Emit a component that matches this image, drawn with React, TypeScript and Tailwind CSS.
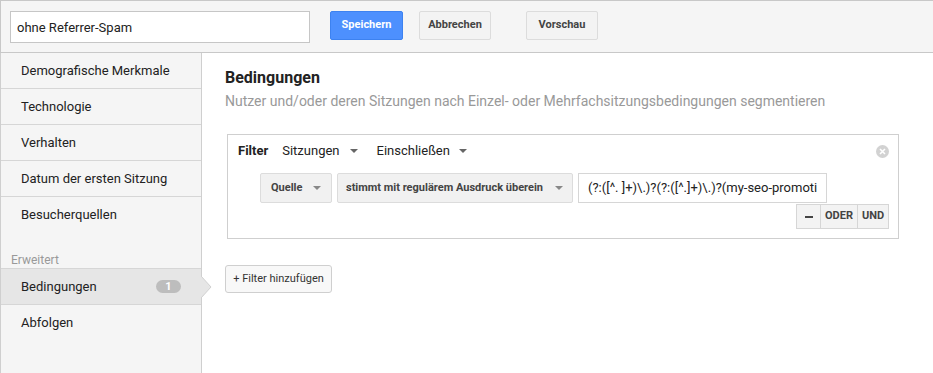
import React from "react";

const sections = [
  "Demografische Merkmale",
  "Technologie",
  "Verhalten",
  "Datum der ersten Sitzung",
  "Besucherquellen",
];

const Caret = ({ className = "" }: { className?: string }) => (
  <svg width="8" height="4" viewBox="0 0 8 4" className={className}>
    <path d="M0 0 L8 0 L4 4 Z" fill="currentColor" />
  </svg>
);

const App = () => {
  return (
    <div className="w-[933px] h-[373px] overflow-hidden bg-white flex flex-col font-['Roboto',sans-serif] text-[#222]">
      {/* top bar */}
      <div className="h-[53px] shrink-0 flex items-start bg-[#f5f5f5] border-t border-b border-l border-[#c8c8c8]">
        <input
          readOnly
          value="ohne Referrer-Spam"
          className="mt-[10px] ml-[9px] w-[300px] h-[32px] px-[6px] bg-white border border-[#c6c6c6] text-[13px] text-[#222] outline-none"
        />
        <button className="mt-[10px] ml-[20px] w-[73px] h-[29px] rounded-[2px] bg-[#4d90fe] border border-[#3d82f0] text-white text-[11px] font-bold">
          Speichern
        </button>
        <button className="mt-[10px] ml-[16px] w-[72px] h-[29px] rounded-[2px] bg-[#f3f3f3] border border-[#dcdcdc] text-[#444] text-[11px] font-bold">
          Abbrechen
        </button>
        <button className="mt-[10px] ml-[35px] w-[72px] h-[29px] rounded-[2px] bg-[#f3f3f3] border border-[#dcdcdc] text-[#444] text-[11px] font-bold">
          Vorschau
        </button>
      </div>

      <div className="flex flex-1 min-h-0">
        {/* sidebar */}
        <div className="relative w-[202px] shrink-0 bg-[#f5f5f5] border-l border-r border-[#cfcfcf] text-[13px]">
          {sections.map((s, i) => (
            <div
              key={s}
              className={`h-[36px] flex items-center pl-[20px] ${i < sections.length - 1 ? "border-b border-[#d6d6d6]" : ""}`}
            >
              {s}
            </div>
          ))}
          <div className="h-[36px] pt-[19px] pl-[10px] border-b border-[#d6d6d6] text-[12px] leading-[16px] text-[#999]">
            Erweitert
          </div>
          <div className="relative h-[36px] flex items-center justify-between pl-[20px] pr-[20px] bg-[#e6e6e6] border-b border-[#d6d6d6]">
            <span>Bedingungen</span>
            <span className="w-[25px] h-[13px] rounded-full bg-[#bdbdbd] text-white text-[11px] font-bold leading-[13px] text-center">
              1
            </span>
            <svg
              width="11"
              height="22"
              viewBox="0 0 11 22"
              className="absolute right-[-11px] top-[7px]"
            >
              <path d="M0 0 L10 11 L0 22 Z" fill="#e6e6e6" />
              <path d="M0 0 L10 11 L0 22" fill="none" stroke="#d0d0d0" strokeWidth="1" />
            </svg>
          </div>
          <div className="h-[36px] flex items-center pl-[20px]">Abfolgen</div>
        </div>

        {/* main */}
        <div className="flex-1 pl-[23px] pt-[15px]">
          <div className="text-[16px] leading-[20px] font-bold text-[#222]">Bedingungen</div>
          <div className="mt-[3px] text-[14px] leading-[20px] text-[#999]">
            Nutzer und/oder deren Sitzungen nach Einzel- oder Mehrfachsitzungsbedingungen segmentieren
          </div>

          <div className="relative mt-[23px] ml-[2px] w-[672px] h-[105px] border border-[#cfcfcf] pt-[6px] pl-[10px] pr-[9px]">
            <div className="flex items-center h-[20px] text-[13px]">
              <span className="font-bold">Filter</span>
              <span className="ml-[14px]">Sitzungen</span>
              <Caret className="ml-[10px] text-[#666]" />
              <span className="ml-[19px]">Einschließen</span>
              <Caret className="ml-[9px] text-[#666]" />
            </div>
            <svg
              width="13"
              height="13"
              viewBox="0 0 13 13"
              className="absolute right-[9px] top-[10px]"
            >
              <circle cx="6.5" cy="6.5" r="6.5" fill="#d2d2d2" />
              <path d="M4 4 L9 9 M9 4 L4 9" stroke="#fff" strokeWidth="1.6" />
            </svg>

            <div className="flex items-center mt-[12px] ml-[22px]">
              <div className="w-[72px] h-[30px] flex items-center justify-between pl-[10px] pr-[10px] bg-[#f1f1f1] border border-[#dcdcdc] rounded-[2px] text-[11px] font-bold text-[#444]">
                <span>Quelle</span>
                <Caret className="text-[#888]" />
              </div>
              <div className="ml-[5px] w-[236px] h-[30px] flex items-center justify-between pl-[8px] pr-[9px] bg-[#f1f1f1] border border-[#dcdcdc] rounded-[2px] text-[11px] font-bold text-[#444]">
                <span>stimmt mit regulärem Ausdruck überein</span>
                <Caret className="text-[#888]" />
              </div>
              <div className="ml-[5px] w-[249px] h-[30px] flex items-center pl-[9px] bg-white border border-[#d6d6d6] text-[13px] text-[#222] whitespace-nowrap">
                (?:([^. ]+)\.)?(?:([^.]+)\.)?(my-seo-promoti
              </div>
            </div>

            <div className="flex justify-end mt-[1px]">
              <div className="flex h-[25px] border border-[#d6d6d6] bg-[#f3f3f3] text-[11px] font-bold text-[#444]">
                <div className="w-[24px] flex items-center justify-center border-r border-[#d6d6d6]">
                  <span className="block w-[8px] h-[2px] bg-[#444]" />
                </div>
                <div className="w-[37px] flex items-center justify-center border-r border-[#d6d6d6]">ODER</div>
                <div className="w-[30px] flex items-center justify-center">UND</div>
              </div>
            </div>
          </div>

          <button className="mt-[26px] w-[107px] h-[28px] rounded-[3px] bg-[#f8f8f8] border border-[#cfcfcf] text-[11px] text-[#333]">
            + Filter hinzufügen
          </button>
        </div>
      </div>
    </div>
  );
};

export default App;
